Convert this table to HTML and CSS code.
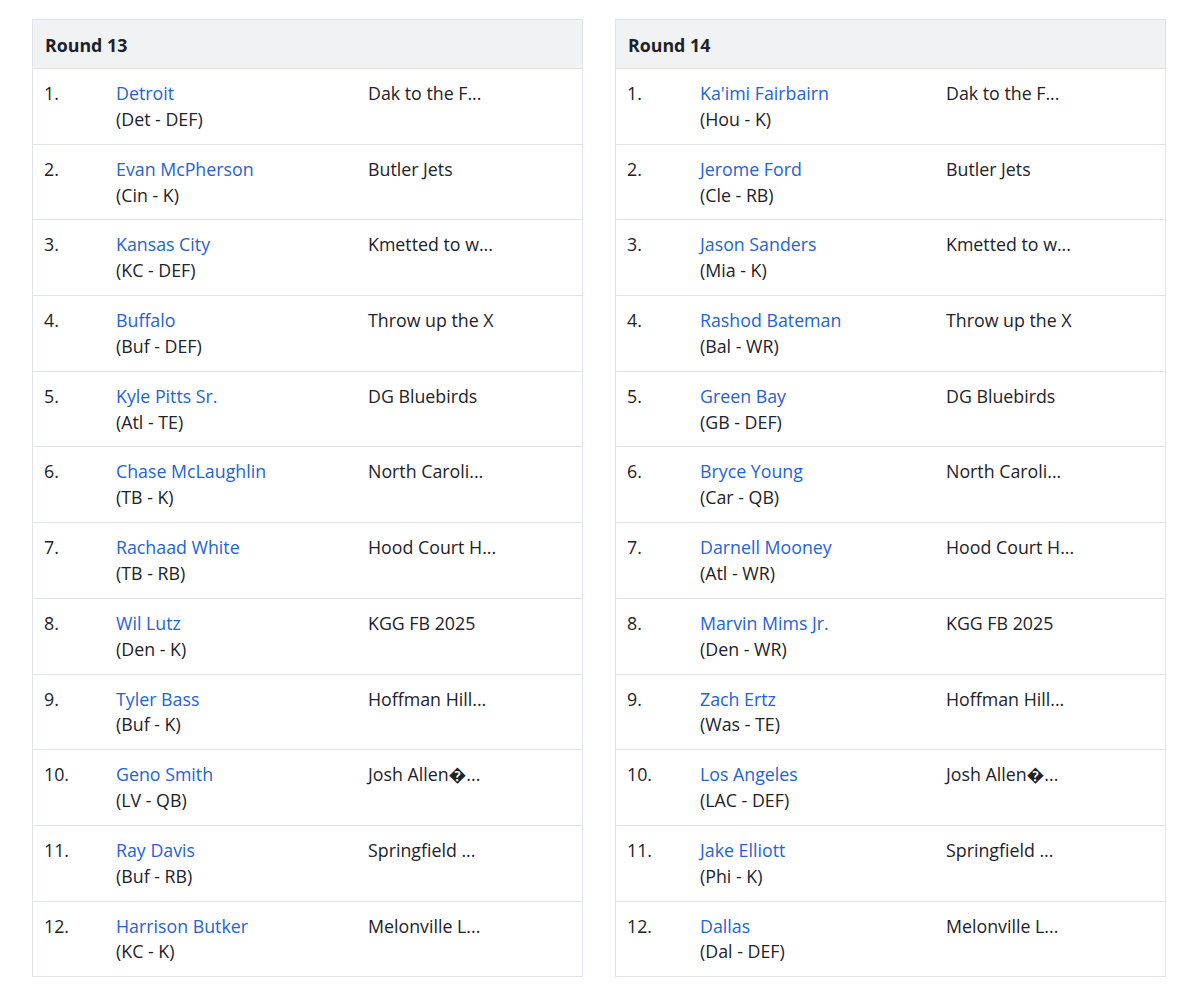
FILE: index.html
```html
<!DOCTYPE html>
<html>
<head>
<meta charset="utf-8">
<link rel="stylesheet" href="styles.css">
</head>
<body>
<div class="page">
  <section class="round">
    <div class="round-head">Round 13</div>
    <div class="pick"><div class="num">1.</div><div class="player"><a class="name">Detroit</a><div class="pos">(Det - DEF)</div></div><div class="team">Dak to the F...</div></div>
    <div class="pick"><div class="num">2.</div><div class="player"><a class="name">Evan McPherson</a><div class="pos">(Cin - K)</div></div><div class="team">Butler Jets</div></div>
    <div class="pick"><div class="num">3.</div><div class="player"><a class="name">Kansas City</a><div class="pos">(KC - DEF)</div></div><div class="team">Kmetted to w...</div></div>
    <div class="pick"><div class="num">4.</div><div class="player"><a class="name">Buffalo</a><div class="pos">(Buf - DEF)</div></div><div class="team">Throw up the X</div></div>
    <div class="pick"><div class="num">5.</div><div class="player"><a class="name">Kyle Pitts Sr.</a><div class="pos">(Atl - TE)</div></div><div class="team">DG Bluebirds</div></div>
    <div class="pick"><div class="num">6.</div><div class="player"><a class="name">Chase McLaughlin</a><div class="pos">(TB - K)</div></div><div class="team">North Caroli...</div></div>
    <div class="pick"><div class="num">7.</div><div class="player"><a class="name">Rachaad White</a><div class="pos">(TB - RB)</div></div><div class="team">Hood Court H...</div></div>
    <div class="pick"><div class="num">8.</div><div class="player"><a class="name">Wil Lutz</a><div class="pos">(Den - K)</div></div><div class="team">KGG FB 2025</div></div>
    <div class="pick"><div class="num">9.</div><div class="player"><a class="name">Tyler Bass</a><div class="pos">(Buf - K)</div></div><div class="team">Hoffman Hill...</div></div>
    <div class="pick"><div class="num">10.</div><div class="player"><a class="name">Geno Smith</a><div class="pos">(LV - QB)</div></div><div class="team">Josh Allen�...</div></div>
    <div class="pick"><div class="num">11.</div><div class="player"><a class="name">Ray Davis</a><div class="pos">(Buf - RB)</div></div><div class="team">Springfield ...</div></div>
    <div class="pick"><div class="num">12.</div><div class="player"><a class="name">Harrison Butker</a><div class="pos">(KC - K)</div></div><div class="team">Melonville L...</div></div>
  </section>
  <section class="round round-b">
    <div class="round-head">Round 14</div>
    <div class="pick"><div class="num">1.</div><div class="player"><a class="name">Ka'imi Fairbairn</a><div class="pos">(Hou - K)</div></div><div class="team">Dak to the F...</div></div>
    <div class="pick"><div class="num">2.</div><div class="player"><a class="name">Jerome Ford</a><div class="pos">(Cle - RB)</div></div><div class="team">Butler Jets</div></div>
    <div class="pick"><div class="num">3.</div><div class="player"><a class="name">Jason Sanders</a><div class="pos">(Mia - K)</div></div><div class="team">Kmetted to w...</div></div>
    <div class="pick"><div class="num">4.</div><div class="player"><a class="name">Rashod Bateman</a><div class="pos">(Bal - WR)</div></div><div class="team">Throw up the X</div></div>
    <div class="pick"><div class="num">5.</div><div class="player"><a class="name">Green Bay</a><div class="pos">(GB - DEF)</div></div><div class="team">DG Bluebirds</div></div>
    <div class="pick"><div class="num">6.</div><div class="player"><a class="name">Bryce Young</a><div class="pos">(Car - QB)</div></div><div class="team">North Caroli...</div></div>
    <div class="pick"><div class="num">7.</div><div class="player"><a class="name">Darnell Mooney</a><div class="pos">(Atl - WR)</div></div><div class="team">Hood Court H...</div></div>
    <div class="pick"><div class="num">8.</div><div class="player"><a class="name">Marvin Mims Jr.</a><div class="pos">(Den - WR)</div></div><div class="team">KGG FB 2025</div></div>
    <div class="pick"><div class="num">9.</div><div class="player"><a class="name">Zach Ertz</a><div class="pos">(Was - TE)</div></div><div class="team">Hoffman Hill...</div></div>
    <div class="pick"><div class="num">10.</div><div class="player"><a class="name">Los Angeles</a><div class="pos">(LAC - DEF)</div></div><div class="team">Josh Allen�...</div></div>
    <div class="pick"><div class="num">11.</div><div class="player"><a class="name">Jake Elliott</a><div class="pos">(Phi - K)</div></div><div class="team">Springfield ...</div></div>
    <div class="pick"><div class="num">12.</div><div class="player"><a class="name">Dallas</a><div class="pos">(Dal - DEF)</div></div><div class="team">Melonville L...</div></div>
  </section>
</div>
</body>
</html>
```
FILE: styles.css
```css
* { box-sizing: border-box; }
html, body { margin: 0; padding: 0; background: #fff; }
body {
  font-family: "Open Sans", "Noto Sans", sans-serif;
  font-size: 17.8px;
  color: #1d2228;
}
.page {
  display: grid;
  grid-template-columns: 551px 551px;
  column-gap: 32px;
  padding: 19px 0 0 32px;
}
.round {
  border: 1px solid #e0e4e9;
}
.round-head {
  background: #f1f2f4;
  font-weight: 700;
  line-height: 24px;
  padding: 13px 12px 11px;
  border-bottom: 1px solid #e0e4e9;
}
.pick {
  display: grid;
  grid-template-columns: 72px 252px 1fr;
  padding: 12px 0 11px;
  line-height: 25.84px;
  border-bottom: 1px solid #e0e4e9;
}
.round-b .pick { grid-template-columns: 73px 246px 1fr; }
.pick:last-child { border-bottom: none; }
.num, .player, .team { padding: 0 11px; }
.name { color: #2463d6; font-weight: 500; text-decoration: none; display: block; }
.pos { color: #1d2228; }
```
